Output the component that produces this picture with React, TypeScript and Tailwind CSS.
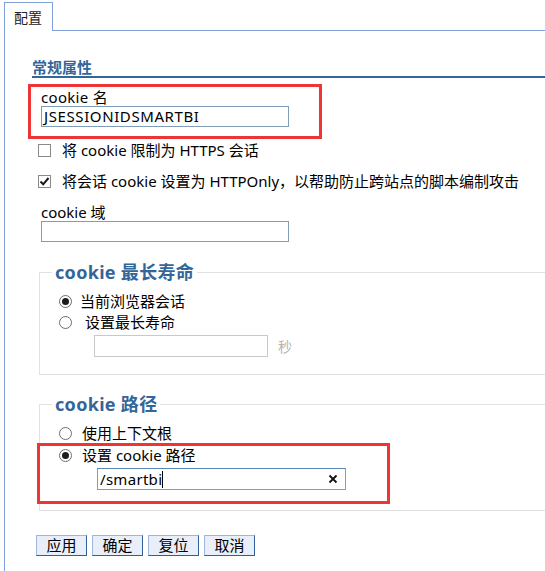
import React from 'react';

const font = "font-['Noto_Sans','Noto_Sans_CJK_SC',sans-serif]";

const Checkbox: React.FC<{ checked?: boolean }> = ({ checked }) => (
    <span className="w-[13px] h-[13px] border border-[#8a8a8a] bg-white flex items-center justify-center shrink-0">
        {checked && (
            <svg width="11" height="11" viewBox="0 0 11 11">
                <path d="M1.5 5.5 L4.2 8.3 L9.5 2" fill="none" stroke="#1a1a1a" strokeWidth="2" />
            </svg>
        )}
    </span>
);

const Radio: React.FC<{ checked?: boolean }> = ({ checked }) => (
    <span className="w-[13px] h-[13px] rounded-full border border-[#6e6e6e] bg-white flex items-center justify-center shrink-0">
        {checked && <span className="w-[7px] h-[7px] rounded-full bg-[#1c1c1c]" />}
    </span>
);

const App: React.FC = () => {
    return (
        <div className={`w-[545px] h-[571px] overflow-hidden bg-white flex flex-col text-[15px] text-black ${font}`}>
            {/* tab strip */}
            <div className="flex items-end ml-[4px] mt-[2px] w-[560px]">
                <div className="h-[29px] w-[49px] border border-b-0 border-[#7fa0d8] bg-white pl-[9px] leading-[29px] text-[14px] text-[#222]">
                    配置
                </div>
                <div className="flex-1 border-b border-[#7fa0d8]" />
            </div>

            <div className="ml-[4px] flex-1 border-l border-[#7fa0d8] w-[560px]">
                {/* 常规属性 */}
                <div className="mt-[27px] ml-[27px] h-[20px] leading-[18px] border-b-2 border-[#336699] text-[15px] font-bold text-[#336699]">
                    常规属性
                </div>

                {/* cookie name (annotated) */}
                <div className="mt-[6px] ml-[23px] w-[294px] border-[3px] border-[#ee3535] pl-[10px] pt-[2px] pb-[9px]">
                    <div className="h-[16px] leading-[16px] tracking-[0.3px]">cookie 名</div>
                    <div className="mt-[1px] w-[248px] h-[21px] border border-[#7f9db9] pl-[2px] leading-[19px] tracking-[0.6px]">
                        JSESSIONIDSMARTBI
                    </div>
                </div>

                <label className="mt-[1px] ml-[33px] h-[20px] flex items-center gap-[11px]">
                    <Checkbox />
                    <span>将 cookie 限制为 HTTPS 会话</span>
                </label>
                <label className="mt-[11px] ml-[33px] h-[20px] flex items-center gap-[11px]">
                    <Checkbox checked />
                    <span>将会话 cookie 设置为 HTTPOnly，以帮助防止跨站点的脚本编制攻击</span>
                </label>

                <div className="mt-[13px] ml-[36px] h-[16px] leading-[16px]">cookie 域</div>
                <div className="mt-[1px] ml-[36px] w-[248px] h-[21px] border border-[#7f9db9]" />

                {/* max age */}
                <fieldset className="mt-[20px] ml-[34px] w-[530px] border border-[#e2e2e2] pb-[17px]">
                    <legend className="ml-[12px] px-[3px] text-[18px] leading-[20px] font-bold text-[#336699] tracking-[0.3px]">
                        cookie 最长寿命
                    </legend>
                    <div className="pt-[9px] pl-[19px]">
                        <label className="h-[21px] flex items-center gap-[8px]">
                            <Radio checked />
                            <span>当前浏览器会话</span>
                        </label>
                        <label className="h-[21px] flex items-center gap-[8px]">
                            <Radio />
                            <span className="ml-[5px]">设置最长寿命</span>
                        </label>
                        <div className="mt-[2px] flex items-center">
                            <div className="ml-[35px] w-[174px] h-[22px] border border-[#c9c9c9] bg-white" />
                            <span className="ml-[10px] text-[#b4b4b4] text-[14px]">秒</span>
                        </div>
                    </div>
                </fieldset>

                {/* path */}
                <fieldset className="mt-[19px] ml-[34px] w-[530px] border border-[#e2e2e2] pb-[6px]">
                    <legend className="ml-[12px] px-[3px] text-[18px] leading-[20px] font-bold text-[#336699] tracking-[0.3px]">
                        cookie 路径
                    </legend>
                    <label className="mt-[9px] pl-[19px] h-[20px] flex items-center gap-[10px]">
                        <Radio />
                        <span>使用上下文根</span>
                    </label>
                    <div className="-ml-[3px] w-[353px] border-[3px] border-[#ee3535] pb-[11px]">
                        <label className="pl-[19px] h-[18px] flex items-center gap-[10px]">
                            <Radio checked />
                            <span>设置 cookie 路径</span>
                        </label>
                        <div className="mt-[4px] ml-[57px] w-[249px] h-[22px] border border-[#7f9db9] border-t-[#5a86b6] flex items-center pl-[2px] pr-[7px]">
                            <span className="leading-[19px] tracking-[0.3px]">/smartbi</span>
                            <span className="w-px h-[17px] bg-black" />
                            <span className="flex-1" />
                            <svg width="10" height="10" viewBox="0 0 10 10">
                                <path d="M1.5 1.5 L8.5 8.5 M8.5 1.5 L1.5 8.5" stroke="#111" strokeWidth="1.8" />
                            </svg>
                        </div>
                    </div>
                </fieldset>

                {/* buttons */}
                <div className="mt-[24px] ml-[31px] flex gap-[5px]">
                    {['应用', '确定', '复位', '取消'].map(label => (
                        <button
                            key={label}
                            className="w-[51px] h-[21px] bg-[#e8effa] border border-[#9fb6d8] border-r-[#2f5f9a] border-b-[#2f5f9a] text-[15px] leading-[19px] text-black"
                        >
                            {label}
                        </button>
                    ))}
                </div>
            </div>
        </div>
    );
};

export default App;
